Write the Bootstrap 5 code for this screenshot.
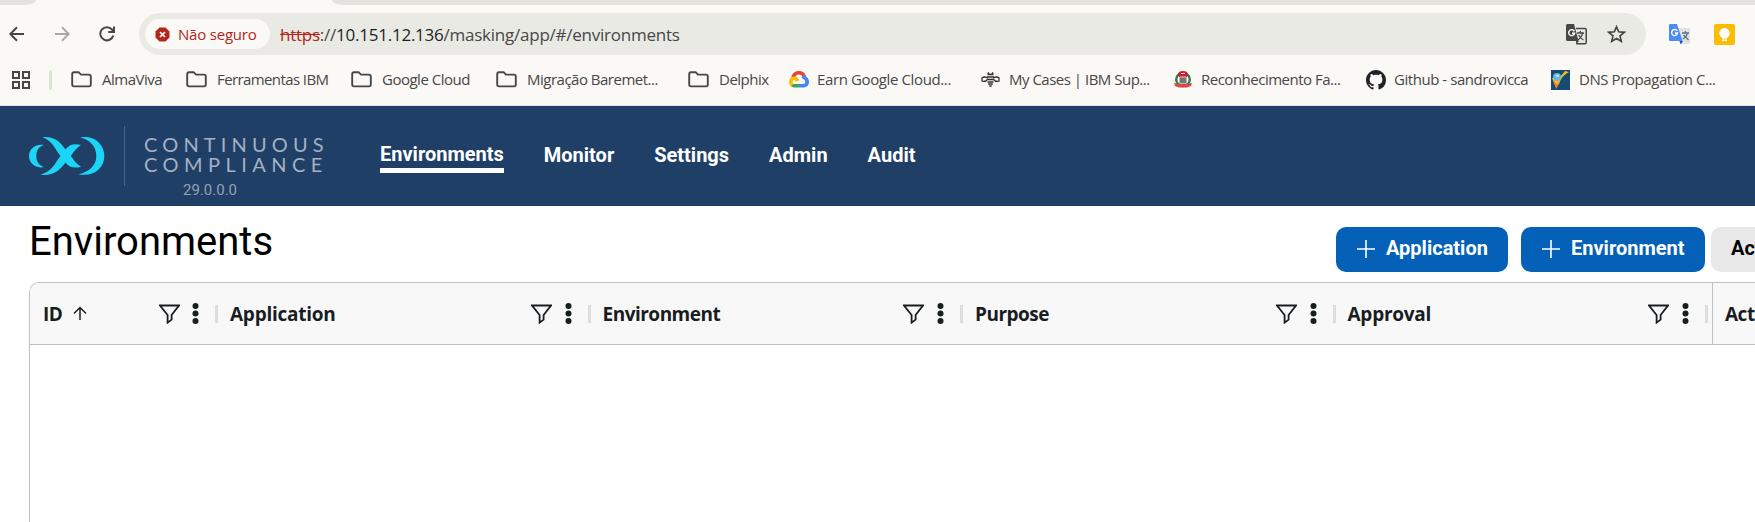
<!DOCTYPE html>
<html lang="pt-BR">
<head>
<meta charset="utf-8">
<title>Environments</title>
<link href="https://cdn.jsdelivr.net/npm/bootstrap@5.3.0/dist/css/bootstrap.min.css" rel="stylesheet">
<style>
  body { font-family: "Open Sans", "Noto Sans", sans-serif; background: #fff; overflow: hidden; height: 522px; }
  svg { display: block; flex: none; }
  .chrome { background: #faf9f5; height: 106px; border-bottom: 1px solid #dde3d6; }
  .tabs { height: 5px; }
  .tabs div { background: #e2e3dd; }
  .tab-l { width: 36px; border-bottom-right-radius: 12px 5px; }
  .tab-r { margin-left: 296px; border-bottom-left-radius: 12px 5px; }
  .toolbar { height: 58px; padding-top: 8px; }
  .omni { width: 1507px; height: 42px; border-radius: 21px; background: #e9eae4; margin-left: 24px; padding: 0 15px 0 6px; }
  .chip { width: 125px; height: 30px; border-radius: 15px; background: #faf9f5; color: #b3261e; padding-left: 10px; font-size: 15px; letter-spacing: -.2px; }
  .url { font-size: 17px; color: #474747; margin-left: 10px; letter-spacing: -.24px; white-space: pre; line-height: 42px; padding-top: 1px; }
  .url b { font-weight: 400; color: #1f1f1f; }
  .url s { color: #b3261e; }
  .marks { height: 34px; padding: 0 0 1px 12px; font-size: 15px; color: #474747; letter-spacing: -.5px; white-space: nowrap; }
  .vbar { width: 3px; height: 20px; border-radius: 2px; background: #d9e6d2; margin: 0 19px 0 19px; }
  .bm { gap: 10px; flex: none; }
  .bm:nth-child(3) { width: 115px } .bm:nth-child(4) { width: 165px; letter-spacing: -.6px } .bm:nth-child(5) { width: 145px }
  .bm:nth-child(6) { width: 192px } .bm:nth-child(7) { width: 101px } .bm:nth-child(8) { width: 192px; letter-spacing: -.38px }
  .bm:nth-child(9) { width: 193px; gap: 9px } .bm:nth-child(10) { width: 192px; gap: 9px } .bm:nth-child(11) { width: 185px; letter-spacing: -.45px }
  .bm:nth-child(12) { letter-spacing: -.42px; gap: 9px }
  .topnav { background: #203f67; height: 100px; border-bottom: 1px solid #1b3962; font-family: Roboto, sans-serif; padding-left: 29px; }
  .rule { width: 1px; height: 60px; background: #4b6483; margin: 20px 0 0 19px; }
  .product { margin: 28px 0 0 19px; color: #a3b1c2; font-family: Lato, sans-serif; font-size: 20px; line-height: 20px; width: 187px; white-space: nowrap; }
  .product .l1 { letter-spacing: 5.15px; } .product .l2 { letter-spacing: 5.45px; }
  .ver { font-family: Roboto, sans-serif; font-size: 15px; line-height: 20px; margin: 6px 0 0 39px; color: #92a1b4; }
  .links { margin-left: 49px; padding-top: 38px; gap: 40px; color: #fff; font-weight: 700; font-size: 20px; line-height: 23px; }
  .links span { margin-top: 0; white-space: nowrap; }
  .links .on { border-bottom: 5px solid #fff; height: 30px; margin-top: -1px; }
  .page-title { font-family: Roboto, sans-serif; font-size: 40px; font-weight: 400; line-height: 48px; color: #000; margin: 12px 0 0 29px; }
  .head-row { height: 76px; }
  .act { font-family: Roboto, sans-serif; font-size: 20px; font-weight: 700; height: 45px; border-radius: 10px; background: #0461b7; color: #fff; flex: none; white-space: nowrap; padding: 0 0 3px 20px; border: 0; display: flex; align-items: center; gap: 10px; line-height: 38px; }
  .act svg { position: relative; top: 1px; }
  .act.grey { background: #e8e8e8; color: #000; width: 110px; }
  .gridbox { margin-left: 29px; height: 240px; border: 1px solid #bfc1c2; border-width: 1px 0 0 1px; border-radius: 10px 0 0 0; overflow: hidden; }
  .ghead { height: 62px; background: #f8f8f8; border-bottom: 1px solid #bfc1c2; font-size: 19px; font-weight: 700; color: #181d1f; letter-spacing: -.5px; }
  .gcol { flex: none; width: 372.5px; padding-left: 12px; white-space: nowrap; }
  .gcol span { padding-top: 2px; }
  .sep { width: 3px; height: 18px; background: #dcdddd; margin-left: 16px; }
</style>
</head>
<body>
<svg width="0" height="0" class="position-absolute">
  <symbol id="folder" viewBox="0 0 21 17"><path d="M1.2 3.2Q1.2 1.2 3 1.2H7.6L10 3.6H18Q19.8 3.6 19.8 5.4V13.6Q19.8 15.4 18 15.4H3Q1.2 15.4 1.2 13.6Z" fill="none" stroke="#474747" stroke-width="1.9"/></symbol>
  <symbol id="filter" viewBox="0 0 21 20"><path d="M1 1.5H20L12.6 11V15.6L8.6 18.6V11Z" fill="none" stroke="#181d1f" stroke-width="1.8"/></symbol>
  <symbol id="dots" viewBox="0 0 7 21"><g fill="#181d1f"><circle cx="3.5" cy="3" r="3"/><circle cx="3.5" cy="10.5" r="3"/><circle cx="3.5" cy="18" r="3"/></g></symbol>
</svg>

<header class="chrome">
  <div class="tabs d-flex"><div class="tab-l"></div><div class="tab-r flex-grow-1"></div></div>
  <div class="toolbar d-flex">
    <div class="d-flex align-items-center" style="height:42px">
      <svg width="16" height="16" style="margin-left:9px" fill="none" stroke="#474747" stroke-width="2"><path d="M15 8H1.5M8 1.2L1.3 8L8 14.8"/></svg>
      <svg width="16" height="16" style="margin-left:29px" fill="none" stroke="#a8a8a5" stroke-width="2"><path d="M1 8H14.5M8 1.2L14.7 8L8 14.8"/></svg>
      <svg width="16" height="16" style="margin-left:29px" fill="none" stroke="#474747" stroke-width="2"><path d="M14.3 9.5A6.6 6.6 0 1 1 13 3.5L14.6 5.6M15 .5V6H9.3"/></svg>
    </div>
    <div class="omni d-flex align-items-center">
      <div class="chip d-flex align-items-center">
        <svg width="15" height="15" viewBox="0 0 15 15"><path d="M4.5 .5H10.5L14.5 4.5V10.5L10.5 14.5H4.5L.5 10.5V4.5Z" fill="#b3261e"/><path d="M5 5L10 10M10 5L5 10" stroke="#fff" stroke-width="1.7"/></svg>
        <span style="margin-left:8px">Não seguro</span>
      </div>
      <span class="url"><s>https</s>://<b>10.151.12.136</b>/masking/app/#/environments</span>
      <svg class="ms-auto" width="21" height="21" viewBox="0 0 21 21"><path d="M10 4.5H19Q20.2 4.5 20.2 5.7V18.6Q20.2 19.8 19 19.8H10.5" fill="none" stroke="#474747" stroke-width="1.5"/><path d="M1.5 0H8L12.5 17H1.5Q0 17 0 15.5V1.5Q0 0 1.5 0Z" fill="#474747"/><path d="M10 17L13 17L10.3 20.5Z" fill="#474747"/><path d="M8.4 7.4A3 3 0 1 0 8.6 9.3H6" fill="none" stroke="#fff" stroke-width="1.4"/><path d="M11 9H18M14.3 7V9M16.7 9Q16 13 12 16M12.6 11Q14.5 14.5 17.5 16" fill="none" stroke="#474747" stroke-width="1.3"/></svg>
      <svg width="19" height="18" viewBox="0 0 19 18" style="margin:0 5px 0 20px" fill="none" stroke="#474747" stroke-width="1.7"><path d="M9.5 1.8L11.7 6.8L17.2 7.3L13 10.9L14.3 16.3L9.5 13.4L4.7 16.3L6 10.9L1.8 7.3L7.3 6.8Z"/></svg>
    </div>
    <div class="d-flex align-items-center" style="height:42px">
      <svg width="21" height="21" viewBox="0 0 21 21" style="margin-left:23px"><path d="M9 4H20Q21 4 21 5V19Q21 20 20 20H12Z" fill="#dfe1e3"/><path d="M13 9H20M16.3 7V9M18.6 9Q17.5 13 14 15M14.5 11L19.5 16" fill="none" stroke="#5c7683" stroke-width="1.3"/><path d="M1.2 0H8L13.5 17H1.2Q0 17 0 15.8V1.2Q0 0 1.2 0Z" fill="#4b8bf5"/><path d="M10.5 17H14L11.7 20.4Z" fill="#2d43c4"/><path d="M8.2 7A3 3 0 1 0 8.6 9H6" fill="none" stroke="#fff" stroke-width="1.4"/></svg>
      <svg width="21" height="21" viewBox="0 0 21 21" style="margin-left:24px"><rect width="21" height="21" rx="2" fill="#fbbc04"/><circle cx="10.5" cy="9.3" r="5.2" fill="#fff"/><path d="M8 12H13V14.5H8ZM8 15.5H13V17H8Z" fill="#fff"/></svg>
    </div>
  </div>
  <div class="marks d-flex align-items-center">
    <svg width="18" height="18" fill="none" stroke="#474747" stroke-width="2"><path d="M1 1H7V7H1ZM11 1H17V7H11ZM1 11H7V17H1ZM11 11H17V17H11Z"/></svg>
    <div class="vbar"></div>
    <div class="bm d-flex align-items-center"><svg width="21" height="17"><use href="#folder"/></svg><span>AlmaViva</span></div>
    <div class="bm d-flex align-items-center"><svg width="21" height="17"><use href="#folder"/></svg><span>Ferramentas IBM</span></div>
    <div class="bm d-flex align-items-center"><svg width="21" height="17"><use href="#folder"/></svg><span>Google Cloud</span></div>
    <div class="bm d-flex align-items-center"><svg width="21" height="17"><use href="#folder"/></svg><span>Migração Baremet...</span></div>
    <div class="bm d-flex align-items-center"><svg width="21" height="17"><use href="#folder"/></svg><span>Delphix</span></div>
    <div class="bm d-flex align-items-center" style="gap:8px"><svg width="20" height="17" viewBox="0 0 20 17" fill="none" stroke-width="3.6"><path d="M4 6.5Q5.5 1.8 10 1.8Q14 1.8 15.3 5.5" stroke="#ea4335"/><path d="M10 14.7H14.8Q18.2 14.2 18.2 11Q18.2 8 14.8 6.2L13.8 5.2" stroke="#4285f4"/><path d="M10 14.7H5Q3.8 14.7 3 14" stroke="#34a853"/><path d="M3.4 14.2Q1.8 13 1.8 10.8Q2 7.3 5.2 7.3Q7.6 7.4 8.6 10" stroke="#fbbc04"/></svg><span>Earn Google Cloud...</span></div>
    <div class="bm d-flex align-items-center"><svg width="19" height="15" viewBox="0 0 19 15" fill="none" stroke="#333" stroke-width="1.3"><path d="M7 6Q3 4 1 6V9Q4 10.5 7 7M12 6Q16 4 18 6V9Q15 10.5 12 7"/><path d="M6.5 2.5H12.5M7 .5L8 2M12 .5L11 2M6 5H13M7 7.5H12M6.5 10H12.5M7.2 12H11.8M8.3 14H10.7" stroke-width="1.6"/></svg><span>My Cases | IBM Sup...</span></div>
    <div class="bm d-flex align-items-center"><svg width="18" height="17" viewBox="0 0 18 17"><ellipse cx="9" cy="8.5" rx="6.8" ry="6.5" fill="none" stroke="#2f7d43" stroke-width="2.4"/><path d="M4 4Q4 0 9 0Q14 0 14 4L12 7H6Z" fill="#c8202f"/><path d="M5.5 7H12.5V12.5H5.5Z" fill="#777"/><path d="M7 2.5H11M6 6H12" stroke="#f3dede"/><path d="M0 12L5 13H13L18 12L17 15L13 16.5H5L1 15Z" fill="#d8474d"/></svg><span>Reconhecimento Fa...</span></div>
    <div class="bm d-flex align-items-center" style="gap:8px"><svg width="20" height="20" viewBox="0 0 16 16" fill="#1f2328"><path d="M8 0C3.58 0 0 3.58 0 8c0 3.54 2.29 6.53 5.47 7.59.4.07.55-.17.55-.38 0-.19-.01-.82-.01-1.49-2.01.37-2.53-.49-2.69-.94-.09-.23-.48-.94-.82-1.13-.28-.15-.68-.52-.01-.53.63-.01 1.08.58 1.23.82.72 1.21 1.87.87 2.33.66.07-.52.28-.87.51-1.07-1.78-.2-3.64-.89-3.64-3.95 0-.87.31-1.59.82-2.15-.08-.2-.36-1.02.08-2.12 0 0 .67-.21 2.2.82.64-.18 1.32-.27 2-.27s1.36.09 2 .27c1.53-1.04 2.2-.82 2.2-.82.44 1.1.16 1.92.08 2.12.51.56.82 1.27.82 2.15 0 3.07-1.87 3.75-3.65 3.95.29.25.54.73.54 1.48 0 1.07-.01 1.93-.01 2.2 0 .21.15.46.55.38A8.01 8.01 0 0 0 16 8c0-4.42-3.58-8-8-8z"/></svg><span>Github - sandrovicca</span></div>
    <div class="bm d-flex align-items-center"><svg width="19" height="20" viewBox="0 0 19 20"><path d="M0 0H19V20H0Z" fill="#164a75"/><path d="M1 8L5 18L8 14Q11 5 18 2L14 1Q10 5 7 11L5 8Z" fill="#f5b921"/><path d="M2 10L5.5 19L8 13L5 14Z" fill="#f07f1c"/><circle cx="6" cy="7" r="4" fill="#63b9e3"/><path d="M4 6L7 4.5L8 7Z" fill="#e8f5fb"/></svg><span>DNS Propagation C...</span></div>
  </div>
</header>

<nav class="topnav d-flex align-items-start">
  <svg width="76" height="39" viewBox="87 111 228 117" style="margin-top:31px" fill="#1cd4f5"><path d="M132 135C105 130 87 148 87 168S105 207 132 201C116 196 109 184 109 168S116 140 132 135Z"/><path d="M127 112C160 107 180 127 190 140L213 169C222 182 230 193 243 200C222 206 207 202 195 186L172 155C160 135 150 120 127 112Z"/><path d="M243 135C222 130 207 134 195 150L172 181C160 201 148 216 122 224C158 229 178 211 190 196L213 167C222 154 230 143 243 135Z"/><path d="M240 112C285 104 313 135 313 168S285 232 235 223C270 215 289 195 289 168S272 120 240 112Z"/></svg>
  <div class="rule"></div>
  <div class="product"><div class="l1">CONTINUOUS</div><div class="l2">COMPLIANCE</div><div class="ver">29.0.0.0</div></div>
  <div class="links d-flex"><span class="on">Environments</span><span>Monitor</span><span>Settings</span><span>Admin</span><span>Audit</span></div>
</nav>

<main>
  <div class="head-row d-flex">
    <h1 class="page-title">Environments</h1>
    <div class="d-flex ms-auto flex-shrink-0" style="width:419px;padding-top:21px">
      <button class="act" style="width:172px"><svg width="20" height="20" stroke="#fff" stroke-width="1.6"><path d="M10 1V19M1 10H19"/></svg>Application</button>
      <button class="act" style="width:184px;margin-left:13px"><svg width="20" height="20" stroke="#fff" stroke-width="1.6"><path d="M10 1V19M1 10H19"/></svg>Environment</button>
      <button class="act grey" style="margin-left:6px">Actions</button>
    </div>
  </div>
  <div class="gridbox">
    <div class="ghead d-flex">
      <div class="gcol d-flex align-items-center" style="width:188px;padding-left:13px"><span>ID</span><svg width="14" height="15" style="margin-left:11px" fill="none" stroke="#181d1f" stroke-width="1.5"><path d="M7 14V1.5M1 7.5L7 1.5L13 7.5"/></svg><svg class="ms-auto" width="21" height="20"><use href="#filter"/></svg><svg width="7" height="21" style="margin-left:12px"><use href="#dots"/></svg><div class="sep"></div></div>
      <div class="gcol d-flex align-items-center"><span style="letter-spacing:-.25px">Application</span><svg class="ms-auto" width="21" height="20"><use href="#filter"/></svg><svg width="7" height="21" style="margin-left:13px"><use href="#dots"/></svg><div class="sep"></div></div>
      <div class="gcol d-flex align-items-center"><span>Environment</span><svg class="ms-auto" width="21" height="20"><use href="#filter"/></svg><svg width="7" height="21" style="margin-left:13px"><use href="#dots"/></svg><div class="sep"></div></div>
      <div class="gcol d-flex align-items-center"><span>Purpose</span><svg class="ms-auto" width="21" height="20"><use href="#filter"/></svg><svg width="7" height="21" style="margin-left:13px"><use href="#dots"/></svg><div class="sep"></div></div>
      <div class="gcol d-flex align-items-center"><span style="letter-spacing:-.25px">Approval</span><svg class="ms-auto" width="21" height="20"><use href="#filter"/></svg><svg width="7" height="21" style="margin-left:13px"><use href="#dots"/></svg><div class="sep"></div></div>
      <div class="gcol d-flex align-items-center" style="margin-left:4px;border-left:1px solid #bfc1c2;padding-left:12px"><span>Actions</span></div>
    </div>
  </div>
</main>
<script src="https://cdn.jsdelivr.net/npm/bootstrap@5.3.0/dist/js/bootstrap.bundle.min.js"></script>
</body>
</html>
